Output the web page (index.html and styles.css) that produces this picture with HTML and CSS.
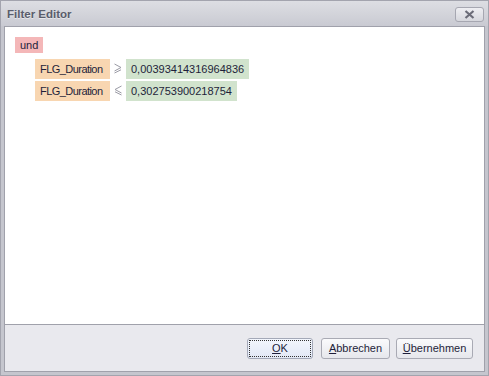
FILE: index.html
```html
<!DOCTYPE html>
<html lang="de">
<head>
    <meta charset="UTF-8">
    <title>Filter Editor</title>
    <link rel="stylesheet" href="styles.css">
</head>
<body>
    <div class="window">
        <div class="titlebar">
            <span class="caption">Filter Editor</span>
            <button class="close" title="Schließen">
                <svg width="11" height="9" viewBox="0 0 11 9"><path d="M1.5 1 L9.5 8 M9.5 1 L1.5 8" stroke="#6b6c78" stroke-width="2.2" fill="none"/></svg>
            </button>
        </div>
        <div class="client">
            <div class="editor">
                <span class="chip group">und</span>
                <div class="conditions">
                    <div class="condition">
                        <span class="chip field">FLG_Duration</span>
                        <span class="op">
                            <svg width="8" height="12" viewBox="0 0 8 12"><path d="M0.5 1 L7 4.5 L0.5 8 M0.5 10 L7 6.8" stroke="#9a9aa4" stroke-width="1" fill="none"/></svg>
                        </span>
                        <span class="chip value">0,00393414316964836</span>
                    </div>
                    <div class="condition">
                        <span class="chip field">FLG_Duration</span>
                        <span class="op">
                            <svg width="8" height="12" viewBox="0 0 8 12"><path d="M7.5 1 L1 4.5 L7.5 8 M7.5 10 L1 6.8" stroke="#9a9aa4" stroke-width="1" fill="none"/></svg>
                        </span>
                        <span class="chip value">0,302753900218754</span>
                    </div>
                </div>
            </div>
            <div class="footer">
                <button class="btn ok"><span class="focus"><u>O</u>K</span></button>
                <button class="btn cancel"><u>A</u>bbrechen</button>
                <button class="btn apply"><u>Ü</u>bernehmen</button>
            </div>
        </div>
    </div>
</body>
</html>
```

FILE: styles.css
```css
html, body {
    margin: 0;
    padding: 0;
}
body {
    font-family: "Liberation Sans", Arial, sans-serif;
    font-size: 11px;
    color: #1e1e3a;
    background: #c4c5cd;
}
.window {
    width: 489px;
    height: 376px;
    box-sizing: border-box;
    border: 1px solid #a3a4ae;
    background: #c5c6ce;
    display: flex;
    flex-direction: column;
}
.titlebar {
    height: 25px;
    display: flex;
    align-items: center;
    justify-content: space-between;
    padding: 0 4px 0 6px;
    background: linear-gradient(#dddee3, #c9cad2);
}
.caption {
    font-weight: bold;
    font-size: 11.5px;
    color: #5a5d6c;
    text-shadow: 0 1px 0 rgba(255, 255, 255, 0.5);
    margin-top: 1px;
}
.close {
    width: 29px;
    height: 15px;
    margin-top: 2px;
    padding: 0;
    border: 1px solid #a6a7b1;
    border-radius: 3px;
    background: linear-gradient(#eeeef2, #d6d7dd);
    display: flex;
    align-items: center;
    justify-content: center;
}
.client {
    flex: 1;
    margin: 0 3px 3px;
    border: 1px solid #a0a1ab;
    display: flex;
    flex-direction: column;
}
.editor {
    flex: 1;
    background: #fff;
    padding: 10px 10px;
}
.chip {
    display: inline-block;
    padding: 0 5px;
    line-height: 20px;
    height: 20px;
}
.group {
    background: #f4b7b8;
    line-height: 16px;
    height: 16px;
}
.conditions {
    margin: 6px 0 0 20px;
}
.condition {
    display: flex;
    align-items: center;
    margin-bottom: 2px;
}
.field {
    background: #f8d6b1;
    width: 65px;
    letter-spacing: -0.55px;
}
.op {
    width: 16px;
    display: flex;
    justify-content: center;
}
.value {
    background: #d1e3cd;
}
.footer {
    height: 46px;
    border-top: 1px solid #a0a1ab;
    background: #e9e9ee;
    display: flex;
    align-items: center;
    justify-content: flex-end;
    padding-right: 11px;
    gap: 6px;
}
.btn {
    height: 21px;
    padding: 0;
    border: 1px solid #a9aab4;
    border-radius: 3px;
    background: linear-gradient(#fafafc, #e6e7ec);
    font-family: "Liberation Sans", Arial, sans-serif;
    font-size: 11px;
    color: #1e1e3a;
}
.ok {
    width: 66px;
    margin-right: 2px;
    background: linear-gradient(#f3f6fd, #e2e8f6);
    border-color: #a4a9b8;
}
.focus {
    display: block;
    margin: 1px;
    line-height: 15px;
    border: 1px dotted #333;
}
.cancel {
    width: 69px;
}
.apply {
    width: 77px;
}
```
